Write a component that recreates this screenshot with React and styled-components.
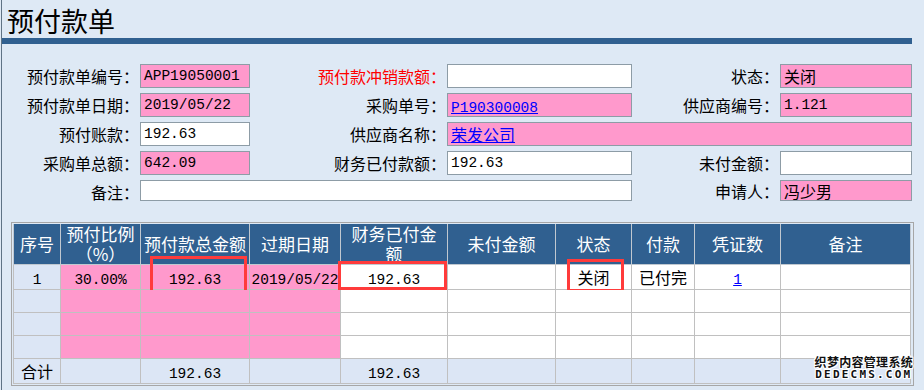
import React from 'react';
import styled, { createGlobalStyle } from 'styled-components';

const GlobalStyle = createGlobalStyle`
  body {
    margin: 0;
    background: #dee9f5;
    font-family: 'Noto Sans CJK SC', sans-serif;
    color: #000;
  }
`;

const Page = styled.div`
  position: relative;
  margin-left: 1px;
  border-left: 1px solid #5f7385;
  min-height: 390px;
  box-sizing: border-box;
`;

const Title = styled.h1`
  margin: 0;
  height: 38px;
  padding: 2px 0 0 5px;
  box-sizing: border-box;
  display: flex;
  align-items: center;
  font-size: 27px;
  font-weight: normal;
`;

const Bar = styled.div`
  width: 910px;
  height: 6px;
  background: #306090;
`;

const Form = styled.div`
  display: grid;
  grid-template-columns: 138px 110px 197px 185px 148px 132px;
  grid-auto-rows: 24px;
  row-gap: 5px;
  margin-top: 20px;
  & > :nth-last-child(-n + 3) {
    height: 21px;
  }
`;

const Label = styled.div`
  display: flex;
  align-items: center;
  justify-content: flex-end;
  padding-right: 1px;
  font-size: 16px;
  white-space: nowrap;
  color: ${(p) => (p.$red ? '#ff0000' : '#000')};
`;

const Field = styled.div`
  grid-column: ${(p) => p.$span || 'auto'};
  display: flex;
  align-items: center;
  box-sizing: border-box;
  border: 1px solid #8d9ca6;
  padding-left: 3px;
  font-size: 16px;
  white-space: nowrap;
  overflow: hidden;
  background: ${(p) => (p.$pink ? '#ff99cc' : '#fff')};
`;

const Mono = styled.span`
  font-family: 'Liberation Mono', monospace;
  font-size: 14.5px;
`;

const Link = styled.a`
  color: #0000ff;
  text-decoration: underline;
`;

const TableWrap = styled.div`
  margin: 18px 0 0 9px;
  width: 899px;
  border: 1px solid #a6a6a6;
  padding: 1px;
`;

const Grid = styled.table`
  width: 897px;
  border-collapse: collapse;
  table-layout: fixed;
`;

const Th = styled.th`
  height: 40px;
  padding: 0 1px;
  background: #306090;
  color: #fff;
  font-size: 17px;
  font-weight: normal;
  line-height: 20px;
  border: 1px solid #c0c8d0;
  border-top: none;
  text-align: center;
  vertical-align: middle;
`;

const Td = styled.td`
  position: relative;
  height: 22px;
  padding: 0;
  border: 1px solid #c0c0c0;
  font-size: 16px;
  text-align: center;
  white-space: nowrap;
  overflow: visible;
  background: ${(p) => (p.$tone === 'pink' ? '#ff99cc' : p.$tone === 'blue' ? '#dce6f5' : '#fff')};
`;

const Mark = styled.span`
  position: absolute;
  top: ${(p) => p.$t}px;
  right: ${(p) => p.$r}px;
  bottom: ${(p) => p.$b}px;
  left: ${(p) => p.$l}px;
  border: 3px solid #ff3b3b;
  pointer-events: none;
`;

const Watermark = styled.div`
  position: absolute;
  right: 11px;
  bottom: 9px;
  display: flex;
  flex-direction: column;
  align-items: center;
  font-weight: bold;
  color: #111;
  line-height: 13px;
  text-shadow: 1px 0 #fff, -1px 0 #fff, 0 1px #fff, 0 -1px #fff, 1px 1px #fff,
    -1px -1px #fff, 1px -1px #fff, -1px 1px #fff;
`;

const WmCn = styled.span`
  font-size: 12px;
  letter-spacing: 0.3px;
`;

const WmEn = styled.span`
  font-family: 'DejaVu Sans Mono', monospace;
  font-size: 11px;
  letter-spacing: 2.2px;
`;

const widths = [47, 80, 109, 91, 107, 108, 76, 63, 86, 130];
const pinkCols = [1, 2, 3];

const App = () => {
  const emptyRows = [0, 1, 2];
  return (
    <>
      <GlobalStyle />
      <Page>
        <Title>预付款单</Title>
        <Bar />
        <Form>
          <Label>预付款单编号：</Label>
          <Field $pink>
            <Mono>APP19050001</Mono>
          </Field>
          <Label $red>预付款冲销款额：</Label>
          <Field />
          <Label>状态：</Label>
          <Field $pink>关闭</Field>

          <Label>预付款单日期：</Label>
          <Field $pink>
            <Mono>2019/05/22</Mono>
          </Field>
          <Label>采购单号：</Label>
          <Field $pink>
            <Link>
              <Mono>P190300008</Mono>
            </Link>
          </Field>
          <Label>供应商编号：</Label>
          <Field $pink>
            <Mono>1.121</Mono>
          </Field>

          <Label>预付账款：</Label>
          <Field>
            <Mono>192.63</Mono>
          </Field>
          <Label>供应商名称：</Label>
          <Field $pink $span="span 3">
            <Link>荣发公司</Link>
          </Field>

          <Label>采购单总额：</Label>
          <Field $pink>
            <Mono>642.09</Mono>
          </Field>
          <Label>财务已付款额：</Label>
          <Field>
            <Mono>192.63</Mono>
          </Field>
          <Label>未付金额：</Label>
          <Field />

          <Label>备注：</Label>
          <Field $span="span 3" />
          <Label>申请人：</Label>
          <Field $pink>冯少男</Field>
        </Form>

        <TableWrap>
          <Grid>
            <colgroup>
              {widths.map((w, i) => (
                <col key={i} style={{ width: w }} />
              ))}
            </colgroup>
            <thead>
              <tr>
                <Th>序号</Th>
                <Th>
                  预付比例
                  <br />
                  （%）
                </Th>
                <Th>预付款总金额</Th>
                <Th>过期日期</Th>
                <Th>
                  财务已付金
                  <br />额
                </Th>
                <Th>未付金额</Th>
                <Th>状态</Th>
                <Th>付款</Th>
                <Th>凭证数</Th>
                <Th>备注</Th>
              </tr>
            </thead>
            <tbody>
              <tr>
                <Td $tone="blue">
                  <Mono>1</Mono>
                </Td>
                <Td $tone="pink">
                  <Mono>30.00%</Mono>
                </Td>
                <Td $tone="pink">
                  <Mono>192.63</Mono>
                  <Mark $t={-9} $r={2} $b={-4} $l={9} />
                </Td>
                <Td $tone="pink">
                  <Mono>2019/05/22</Mono>
                </Td>
                <Td>
                  <Mono>192.63</Mono>
                  <Mark $t={-4} $r={0} $b={-1} $l={-3} />
                </Td>
                <Td />
                <Td>
                  关闭
                  <Mark $t={-6} $r={7} $b={-3} $l={11} />
                </Td>
                <Td>已付完</Td>
                <Td>
                  <Link>
                    <Mono>1</Mono>
                  </Link>
                </Td>
                <Td />
              </tr>
              {emptyRows.map((r) => (
                <tr key={r}>
                  {widths.map((_, i) => (
                    <Td key={i} $tone={i === 0 ? 'blue' : pinkCols.includes(i) ? 'pink' : 'white'} />
                  ))}
                </tr>
              ))}
              <tr>
                <Td $tone="blue">合计</Td>
                <Td $tone="blue" />
                <Td $tone="blue">
                  <Mono>192.63</Mono>
                </Td>
                <Td $tone="blue" />
                <Td $tone="blue">
                  <Mono>192.63</Mono>
                </Td>
                <Td $tone="blue" />
                <Td $tone="blue" />
                <Td $tone="blue" />
                <Td $tone="blue" />
                <Td $tone="blue" />
              </tr>
            </tbody>
          </Grid>
        </TableWrap>
        <Watermark>
          <WmCn>织梦内容管理系统</WmCn>
          <WmEn>DEDECMS.COM</WmEn>
        </Watermark>
      </Page>
    </>
  );
};

export default App;
